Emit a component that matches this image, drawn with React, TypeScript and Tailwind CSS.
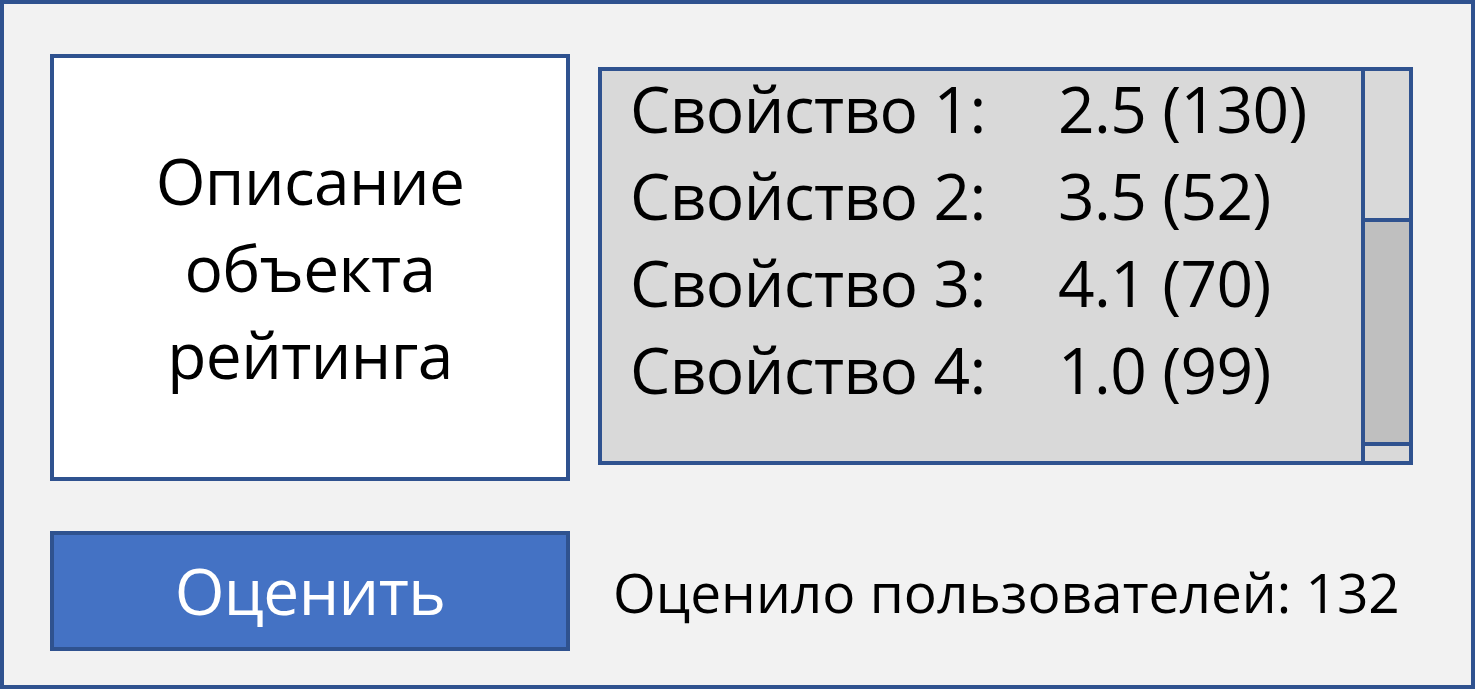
const font = { fontFamily: '"Open Sans", "Noto Sans", sans-serif' };

const properties = [
    { label: 'Свойство 1:', value: '2.5 (130)' },
    { label: 'Свойство 2:', value: '3.5 (52)' },
    { label: 'Свойство 3:', value: '4.1 (70)' },
    { label: 'Свойство 4:', value: '1.0 (99)' },
];

function Scrollbar() {
    return (
        <div className="flex w-[48px] flex-col border-l-4 border-[#2f528f] bg-[#d9d9d9]">
            <div className="h-[147px]" />
            <div className="h-[228px] border-y-4 border-[#2f528f] bg-[#bfbfbf]" />
            <div className="flex-1" />
        </div>
    );
}

function PropertiesPanel() {
    return (
        <div className="mt-[13px] flex h-[398px] w-[815px] border-4 border-[#2f528f] bg-[#d9d9d9]">
            <div className="-mt-[6px] flex-1 pl-[28px] text-[64px] leading-[87px] tracking-[-0.6px] text-black">
                {properties.map((p) => (
                    <div key={p.label} className="flex">
                        <span className="w-[428px] shrink-0">{p.label}</span>
                        <span>{p.value}</span>
                    </div>
                ))}
            </div>
            <Scrollbar />
        </div>
    );
}

export default function App() {
    return (
        <div
            className="h-[689px] w-[1475px] border-4 border-[#2f528f] bg-[#f2f2f2] pl-[46px] pt-[50px]"
            style={font}
        >
            <div className="flex items-start gap-[28px]">
                {/* Description */}
                <div className="flex h-[427px] w-[520px] items-center justify-center border-4 border-[#2f528f] bg-white">
                    <p className="text-center text-[64px] leading-[87px] tracking-[-0.6px] text-black">
                        Описание
                        <br />
                        объекта
                        <br />
                        рейтинга
                    </p>
                </div>
                <PropertiesPanel />
            </div>

            <div className="mt-[50px] flex items-center">
                <button className="flex h-[120px] w-[520px] items-center justify-center border-4 border-[#2f528f] bg-[#4472c4] text-[64px] leading-none tracking-[-0.6px] text-white">
                    Оценить
                </button>
                <span className="ml-[43px] text-[55px] leading-none text-black">Оценило пользователей: 132</span>
            </div>
        </div>
    );
}
